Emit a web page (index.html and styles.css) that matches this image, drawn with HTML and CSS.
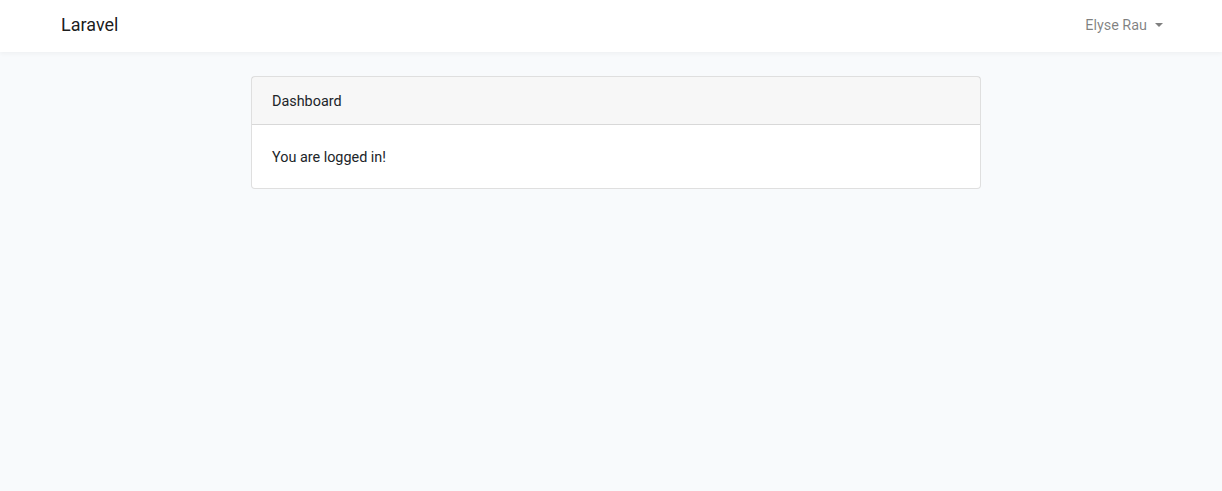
FILE: index.html
```html
<!DOCTYPE html>
<html lang="en">
<head>
    <meta charset="UTF-8">
    <meta name="viewport" content="width=device-width, initial-scale=1.0">
    <title>Laravel</title>
    <link rel="stylesheet" href="styles.css">
</head>
<body>

    <nav class="navbar">
        <div class="container navbar-inner">
            <a class="navbar-brand" href="#">Laravel</a>
            <a class="nav-link dropdown-toggle" href="#">Elyse Rau</a>
        </div>
    </nav>

    <main class="py-4">
        <div class="container">
            <div class="row">
                <div class="card">
                    <div class="card-header">Dashboard</div>
                    <div class="card-body">
                        You are logged in!
                    </div>
                </div>
            </div>
        </div>
    </main>

</body>
</html>
```

FILE: styles.css
```css
*, *::before, *::after {
    box-sizing: border-box;
}
body {
    margin: 0;
    font-family: Roboto, "Noto Sans", sans-serif;
    font-size: 14.4px;
    line-height: 1.6;
    color: #212529;
    background-color: #f8fafc;
}
a {
    text-decoration: none;
}
.container {
    width: 1140px;
    margin: 0 auto;
    padding: 0 15px;
    position: relative;
    left: 5px;
}
.navbar {
    background-color: #fff;
    box-shadow: 0 2px 4px rgba(0,0,0,0.04);
}
.navbar-inner {
    display: flex;
    align-items: center;
    justify-content: space-between;
    height: 52px;
}
.navbar-brand {
    font-size: 18px;
    color: rgba(0,0,0,0.9);
    margin-top: -2px;
}
.nav-link {
    color: rgba(0,0,0,0.5);
    padding: 8px;
}
.dropdown-toggle::after {
    display: inline-block;
    margin-left: 8px;
    vertical-align: 3px;
    content: "";
    border-top: 4px solid;
    border-right: 4px solid transparent;
    border-left: 4px solid transparent;
}
.py-4 {
    padding: 24px 0;
}
.row {
    display: flex;
    justify-content: center;
}
.card {
    width: 730px;
    background-color: #fff;
    border: 1px solid rgba(0,0,0,0.125);
    border-radius: 4px;
}
.card-header {
    padding: 13px 20px 11px;
    background-color: rgba(0,0,0,0.03);
    border-bottom: 1px solid rgba(0,0,0,0.125);
}
.card-body {
    padding: 21px 20px 19px;
}
```
